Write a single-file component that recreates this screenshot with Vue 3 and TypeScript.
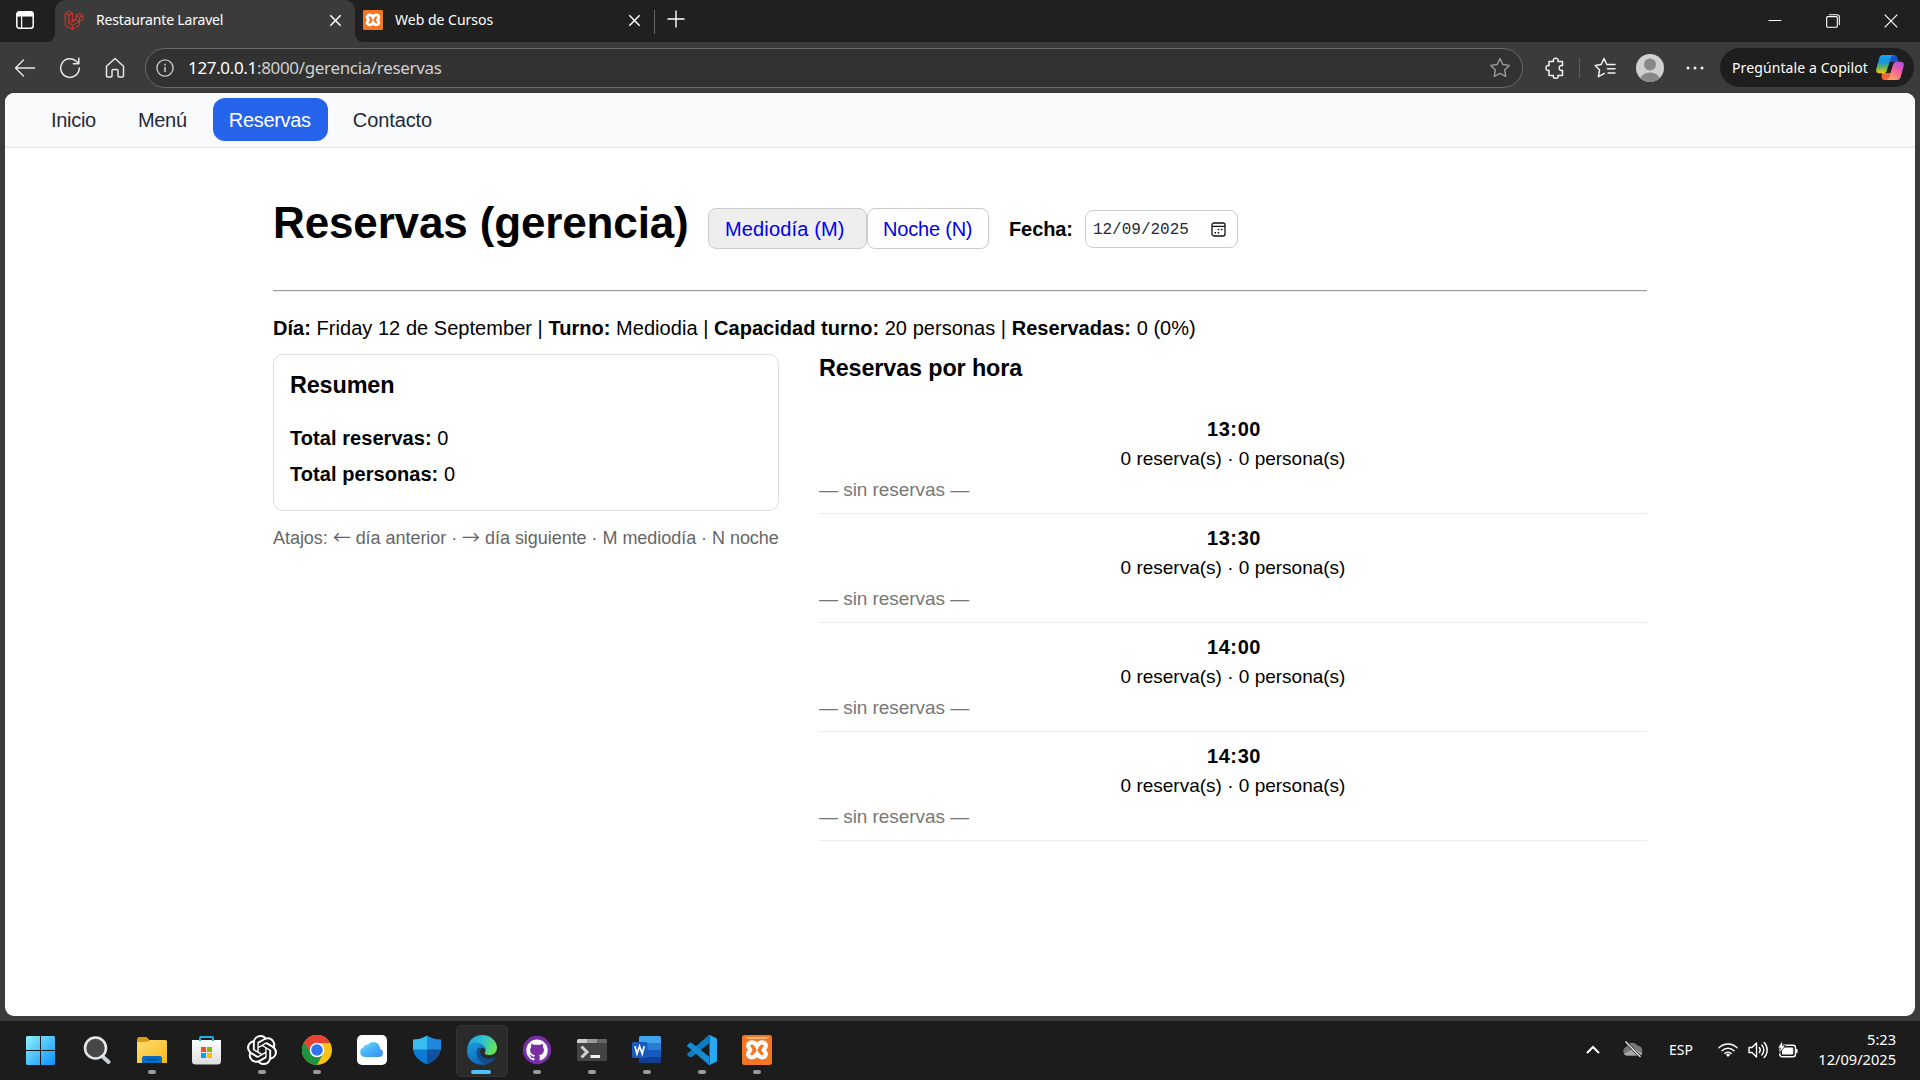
<script setup lang="ts">
interface Slot {
  time: string
  bookings: number
  people: number
}

interface NavItem {
  label: string
  key: string
}

const navItems: NavItem[] = [
  { label: 'Inicio', key: 'inicio' },
  { label: 'Menú', key: 'menu' },
  { label: 'Reservas', key: 'reservas' },
  { label: 'Contacto', key: 'contacto' },
]
const activeNav = 'reservas'

const slots: Slot[] = ['13:00', '13:30', '14:00', '14:30'].map((time) => ({
  time,
  bookings: 0,
  people: 0,
}))

const xamppPath =
  'M15 11C13.500 8 11.800 7.300 10 7.300 6.500 7.300 5.800 10.300 6.500 12 7 13.300 8.300 14 8.300 15S6.800 16.700 6.300 18.300C5.700 20.700 7.600 22.300 10 22.300 12.300 22.300 13.600 21 15 18.700 16.400 21 17.700 22.300 20 22.300 22.400 22.300 24.300 20.700 23.700 18.300 23.200 16.700 21.700 16 21.700 15S23 13.300 23.500 12C24.200 10.300 23.500 7.300 20 7.300 18.200 7.300 16.500 8 15 11z'
</script>

<template>
  <div class="screen">
    <!-- Tab strip -->
    <div class="tabs">
      <div class="tab-menu">
        <svg width="20" height="20" viewBox="0 0 20 20" fill="none" stroke="#fff" stroke-width="1.5">
          <rect x="1.8" y="1.8" width="16.4" height="16.4" rx="2.5" />
          <path d="M2 4.3h16" stroke-width="4.5" />
          <path d="M6.6 6v12" stroke-width="1.2" />
        </svg>
      </div>
      <div class="tab active">
        <svg class="fav" width="20" height="20" viewBox="0 0 20 21" fill="none" stroke="#e0352b" stroke-width="1.05" stroke-linejoin="round">
          <path d="M.8 3.5 4.6 1.3l3.7 2.2v8.5l3.6-2.1V6l3.7-2.2L19.3 6v4.1l-3.7 2.1v4.1l-7.3 4.1-7.5-4.2z" />
          <path d="m.8 3.5 3.8 2.1 3.7-2.1M4.6 5.6V14l3.7 2.2 7.3-4-3.7-2.3L4.6 14M8.3 16.2v4.2M11.9 6l3.7 2.1L19.3 6M15.6 8.1v4.1" />
        </svg>
        <span class="tab-title laravel">Restaurante Laravel</span>
        <svg class="x" width="13" height="13" viewBox="0 0 13 13" stroke="#fff" stroke-width="1.5"><path d="m1.3 1.3 10.4 10.4M11.7 1.3 1.3 11.7" /></svg>
      </div>
      <div class="tab second">
        <svg class="fav" width="20" height="20" viewBox="0 0 30 30">
          <rect width="30" height="30" rx="2" fill="#f37623" />
          <path :d="xamppPath" fill="none" stroke="#fff" stroke-width="4.2" />
        </svg>
        <span class="tab-title cursos">Web de Cursos</span>
        <svg class="x" width="13" height="13" viewBox="0 0 13 13" stroke="#fff" stroke-width="1.5"><path d="m1.3 1.3 10.4 10.4M11.7 1.3 1.3 11.7" /></svg>
      </div>
      <div class="tab-sep"></div>
      <svg class="plus" width="18" height="18" viewBox="0 0 18 18" stroke="#fff" stroke-width="1.4"><path d="M9 .5v17M.5 9h17" /></svg>
      <div class="win-controls">
        <svg width="14" height="14" viewBox="0 0 14 14" stroke="#fff" fill="none"><path d="M.5 6.500h13" /></svg>
        <svg width="14" height="14" viewBox="0 0 14 14" stroke="#fff" fill="none" stroke-width="1.1"><rect x=".7" y="2.600" width="10.600" height="10.600" rx="1" /><path d="M3 .7h8a2.300 2.300 0 0 1 2.300 2.300v8" /></svg>
        <svg width="14" height="14" viewBox="0 0 14 14" stroke="#fff" fill="none" stroke-width="1.2"><path d="m.7.7 12.600 12.600M13.300.7.7 13.300" /></svg>
      </div>
    </div>

    <!-- Toolbar -->
    <div class="toolbar">
      <svg class="tb-back" width="22" height="20" viewBox="0 0 22 20" fill="none" stroke="#e8e8e8" stroke-width="1.400" stroke-linecap="round" stroke-linejoin="round"><path d="M20.500 10H1.500M9.500 2 1.500 10l8 8" /></svg>
      <svg class="tb-reload" width="22" height="22" viewBox="0 0 22 22" fill="none" stroke="#e8e8e8" stroke-width="1.500" stroke-linecap="round" stroke-linejoin="round"><path d="M20.300 11A9.300 9.300 0 1 1 17.600 4.500L19.600 6.500M19.800 1.300v5.500h-5.500" /></svg>
      <svg class="tb-home" width="20" height="22" viewBox="0 0 20 22" fill="none" stroke="#e8e8e8" stroke-width="1.500" stroke-linejoin="round"><path d="M1.500 9.200 10 1.500l8.500 7.700v9.600q0 1.200-1.200 1.200h-3.100q-1.200 0-1.200-1.200v-5q0-1.200-1.200-1.200H8.200q-1.200 0-1.200 1.200v5Q7 20 5.800 20H2.700q-1.200 0-1.200-1.200z" /></svg>
      <div class="url">
        <svg width="18" height="18" viewBox="0 0 18 18" fill="none" stroke="#c4c4c4" stroke-width="1.400"><circle cx="9" cy="9" r="8.100" /><path d="M9 8v5M9 4.800v1.700" stroke-width="1.600" /></svg>
        <span class="url-text"><b>127.0.0.1</b>:8000/gerencia/reservas</span>
        <svg class="url-star" width="22" height="22" viewBox="0 0 22 22" fill="none" stroke="#9a9a9a" stroke-width="1.400" stroke-linejoin="round"><path d="m11 1.500 2.800 6 6.500.9-4.700 4.500 1.200 6.600L11 16.300l-5.800 3.200 1.200-6.600L1.700 8.400l6.500-.9z" /></svg>
      </div>
      <svg class="tb-ext" width="20" height="22" viewBox="0 0 20 22" fill="none" stroke="#f0f0f0" stroke-width="1.500" stroke-linejoin="round"><path d="M4 4.500h4.500C7.800 2.500 9 1.300 10.700 1.300s2.900 1.200 2.200 3.200h4.600v4.300c-2-.7-3.300.4-3.300 2.200s1.300 2.900 3.300 2.200v5.300h-4.600c.7 2-.5 2.800-2.200 2.800s-2.900-.8-2.200-2.800H4v-5.300C2 13.900 1 12.700 1 11s1-2.900 3-2.200z" /></svg>
      <div class="tb-sep"></div>
      <svg class="tb-favs" width="22" height="22" viewBox="0 0 22 22" fill="none" stroke="#f0f0f0" stroke-width="1.500" stroke-linejoin="round" stroke-linecap="round"><path d="M12.800 7.500 10 1.500 7.200 7.500 1.200 8.400l4.400 4.500-1.200 6.800 6-3.300M12.800 7.500H21M13.500 11.800H21M14 16h7" /></svg>
      <svg class="tb-avatar" width="28" height="28" viewBox="0 0 28 28"><defs><clipPath id="av"><circle cx="14" cy="14" r="14" /></clipPath></defs><g clip-path="url(#av)"><rect width="28" height="28" fill="#d2d0ce" /><circle cx="14" cy="10.500" r="6" fill="#8a8886" /><ellipse cx="14" cy="26" rx="10" ry="7.500" fill="#8a8886" /></g></svg>
      <svg class="tb-dots" width="18" height="4" viewBox="0 0 18 4" fill="#f0f0f0"><circle cx="2" cy="2" r="1.500" /><circle cx="9" cy="2" r="1.500" /><circle cx="16" cy="2" r="1.500" /></svg>
      <div class="copilot">
        <span>Pregúntale a Copilot</span>
        <svg width="28" height="27" viewBox="0 0 28 27">
          <defs>
            <linearGradient id="cpa" x1="0" y1="0" x2="0" y2="1"><stop offset="0" stop-color="#16a5ee" /><stop offset=".4" stop-color="#1994d4" /><stop offset=".7" stop-color="#6cb84a" /><stop offset="1" stop-color="#f7cb0c" /></linearGradient>
            <linearGradient id="cpb" x1="1" y1="0" x2=".3" y2="1"><stop offset="0" stop-color="#a14cf5" /><stop offset=".5" stop-color="#f3609f" /><stop offset="1" stop-color="#fda45c" /></linearGradient>
          </defs>
          <path d="M13 1h5.500c1.600 0 2.300 1.200 2.800 2.800L22.500 8H14z" fill="#1a50d2" />
          <path d="M6 19h8l-1 7H9c-2 0-3-1-3.400-2.600z" fill="#f0643c" />
          <path d="M6.500 1h10.700c-1.700.8-2.300 2.700-3 5L10.800 16.500C10.200 18.500 9 19.300 7 19.300H3.200C.7 19.300-.3 17.500.3 15L3.300 4C3.900 2 5 1 6.500 1z" fill="url(#cpa)" />
          <path d="M21.500 26H10.800c1.700-.8 2.300-2.700 3-5l3.400-10.500c.6-2 1.800-2.800 3.800-2.800h3.800c2.500 0 3.500 1.800 2.900 4.300l-3 11c-.6 2-1.700 3-3.200 3z" fill="url(#cpb)" />
        </svg>
      </div>
    </div>

    <!-- Web page -->
    <div class="page">
      <nav class="nav">
        <a v-for="item in navItems" :key="item.key" :class="['nav-link', item.key, { on: item.key === activeNav }]">{{ item.label }}</a>
      </nav>
      <main class="main">
        <header class="head">
          <h1>Reservas (gerencia)</h1>
          <div class="shifts">
            <a class="shift noon on">Mediodía (M)</a>
            <a class="shift night">Noche (N)</a>
          </div>
          <label class="date-label">Fecha:</label>
          <div class="date">
            <span>12/09/2025</span>
            <svg width="15" height="15" viewBox="0 0 15 15" fill="none" stroke="#111" stroke-width="1.300"><rect x="1" y="1" width="13" height="13" rx="2" /><path d="M1 4.300h13" /><path d="M6.700 7.500h1.600M9.900 7.500h1.600M3.500 10.700h1.600M6.700 10.700h1.600" stroke-width="1.500" /></svg>
          </div>
        </header>
        <div class="rule"></div>
        <p class="info"><b>Día:</b> Friday 12 de September | <b>Turno:</b> Mediodia | <b>Capacidad turno:</b> 20 personas | <b>Reservadas:</b> 0 (0%)</p>
        <div class="cols">
          <section>
            <div class="card">
              <h3 class="resumen">Resumen</h3>
              <p class="tot-r"><b>Total reservas:</b> 0</p>
              <p class="tot-p"><b>Total personas:</b> 0</p>
            </div>
            <p class="hints">Atajos: <i>←</i> día anterior · <i>→</i> día siguiente · M mediodía · N noche</p>
          </section>
          <section>
            <h3 class="byhour">Reservas por hora</h3>
            <div class="slots">
              <div v-for="slot in slots" :key="slot.time" class="slot">
                <div class="time">{{ slot.time }}</div>
                <div class="count">{{ slot.bookings }} reserva(s) · {{ slot.people }} persona(s)</div>
                <div class="empty">— sin reservas —</div>
              </div>
            </div>
          </section>
        </div>
      </main>
    </div>

    <!-- Taskbar -->
    <div class="taskbar">
      <div class="apps">
        <div class="app">
          <svg class="start" width="29" height="29" viewBox="0 0 29 29"><defs><linearGradient id="win" x1="0" y1="0" x2="1" y2="1"><stop offset="0" stop-color="#8cf3fb" /><stop offset="1" stop-color="#0d8ffb" /></linearGradient></defs><path d="M1 0h13v14H0V1zM15 0h13l1 1v13H15zM0 15h14v14H1l-1-1zM15 15h14v13l-1 1H15z" fill="url(#win)" /></svg>
        </div>
        <div class="app">
          <svg width="28" height="30" viewBox="0 0 28 30"><path d="m18.500 20.500 7 6.500" stroke="#c9ced8" stroke-width="4" stroke-linecap="round" /><circle cx="12.500" cy="13" r="10.500" fill="#474747" stroke="#e3e6ec" stroke-width="2.600" /></svg>
        </div>
        <div class="app running">
          <svg width="30" height="30" viewBox="0 0 30 30"><defs><linearGradient id="fold" x1="0" y1="0" x2="1" y2="1"><stop offset="0" stop-color="#ffde76" /><stop offset="1" stop-color="#f9b914" /></linearGradient></defs><path d="M0 4.500Q0 2 2 2h7.500l3 3V9H0z" fill="#dd9d0e" /><path d="M0 7h10.500l2.500-2H28.500Q30 5 30 6.500V28H0z" fill="url(#fold)" /><path d="M5 28v-5q0-2 2-2h16q2 0 2 2v5z" fill="#0a6cc0" /><path d="M8.500 24.500h13" stroke="#0a4a86" stroke-width="1.200" /></svg>
        </div>
        <div class="app">
          <svg width="29" height="30" viewBox="0 0 29 30"><defs><linearGradient id="store" x1="0" y1="0" x2="0" y2="1"><stop offset="0" stop-color="#fff" /><stop offset="1" stop-color="#dcdcdc" /></linearGradient></defs><path d="M8 7V3q0-1 1-1h11q1 0 1 1v4" fill="none" stroke="#25b0e6" stroke-width="2" /><path d="M0 5h29v21q0 3.500-3.500 3.500h-22Q0 29.500 0 26z" fill="url(#store)" /><path d="M9 12h5v5H9z" fill="#f25022" /><path d="M15 12h5v5h-5z" fill="#7fba00" /><path d="M9 18h5v5H9z" fill="#00a4ef" /><path d="M15 18h5v5h-5z" fill="#ffb900" /><path d="M7 5h2v1H7zM20 5h2v1h-2z" fill="#25b0e6" /></svg>
        </div>
        <div class="app running">
          <svg width="30" height="30" viewBox="0 0 24 24" fill="#fff"><path d="M22.282 9.821a5.985 5.985 0 0 0-.516-4.910 6.046 6.046 0 0 0-6.510-2.900A6.065 6.065 0 0 0 4.981 4.182a5.985 5.985 0 0 0-3.998 2.900 6.046 6.046 0 0 0 .743 7.097 5.980 5.980 0 0 0 .510 4.911 6.051 6.051 0 0 0 6.515 2.900A5.985 5.985 0 0 0 13.260 24a6.056 6.056 0 0 0 5.772-4.206 5.990 5.990 0 0 0 3.998-2.900 6.056 6.056 0 0 0-.748-7.073zM13.260 22.430a4.476 4.476 0 0 1-2.876-1.040l.142-.081 4.779-2.758a.795.795 0 0 0 .393-.681v-6.737l2.020 1.169a.071.071 0 0 1 .038.052v5.583a4.504 4.504 0 0 1-4.496 4.493zM3.600 18.304a4.471 4.471 0 0 1-.535-3.014l.142.085 4.783 2.758a.771.771 0 0 0 .781 0l5.843-3.368v2.332a.080.080 0 0 1-.033.062L9.740 19.950a4.499 4.499 0 0 1-6.140-1.646zM2.340 7.896a4.485 4.485 0 0 1 2.366-1.973V11.600a.766.766 0 0 0 .388.677l5.814 3.354-2.020 1.169a.076.076 0 0 1-.071 0l-4.830-2.787A4.504 4.504 0 0 1 2.340 7.896zm16.597 3.855-5.833-3.387L15.119 7.200a.076.076 0 0 1 .071 0l4.830 2.792a4.494 4.494 0 0 1-.676 8.105v-5.678a.790.790 0 0 0-.407-.668zm2.010-3.023-.141-.085-4.774-2.782a.776.776 0 0 0-.785 0L9.409 9.230V6.897a.066.066 0 0 1 .028-.062l4.830-2.787a4.499 4.499 0 0 1 6.680 4.660zM8.307 12.863l-2.020-1.164a.080.080 0 0 1-.038-.057V6.075a4.499 4.499 0 0 1 7.376-3.453l-.142.080L8.704 5.460a.795.795 0 0 0-.393.681zm1.097-2.365 2.602-1.500 2.607 1.500v2.999l-2.597 1.500-2.607-1.500z" /></svg>
        </div>
        <div class="app running">
          <svg width="30" height="30" viewBox="0 0 30 30"><circle cx="15" cy="15" r="15" fill="#fbc116" /><path d="M15 15 8.500 18.700 2 7.500a15 15 0 0 1 26 0L28 8H15z" fill="#ea4335" /><path d="M2 7.500A15 15 0 0 0 15 30l6.300-11.500L15 20l-6-2z" fill="#1e9442" /><path d="M28 8H15v-1h12.500z" fill="#e33b2e" /><circle cx="15" cy="15" r="7.300" fill="#fff" /><circle cx="15" cy="15" r="5.800" fill="#2d74ea" /></svg>
        </div>
        <div class="app">
          <svg width="30" height="30" viewBox="0 0 30 30"><defs><linearGradient id="icl" x1="0" y1="0" x2="1" y2="1"><stop offset="0" stop-color="#8ad8fa" /><stop offset=".5" stop-color="#43b2f8" /><stop offset="1" stop-color="#3a8bf5" /></linearGradient></defs><rect width="30" height="30" rx="5" fill="#fff" /><path d="M7.500 22a5 5 0 0 1-1.300-9.500 4 4 0 0 1 4.500-2.700 6.800 6.800 0 0 1 12.300 4 4.300 4.300 0 0 1-.2 8.200z" fill="url(#icl)" /></svg>
        </div>
        <div class="app">
          <svg width="30" height="30" viewBox="0 0 30 30"><path d="M15 .5Q21 4.500 29 4.500V15H15z" fill="#2089dc" /><path d="M15 .5Q9 4.500 1 4.500V15h14z" fill="#38bdf0" /><path d="M1 14.500h14v15Q2 24 1 14.500z" fill="#0d7ad2" /><path d="M29 14.500H15v15Q28 24 29 14.500z" fill="#13529c" /></svg>
        </div>
        <div class="app edge">
          <svg width="30" height="30" viewBox="0 0 30 30"><defs><linearGradient id="ea" x1="0" y1=".3" x2="1" y2=".6"><stop offset="0" stop-color="#249fe0" /><stop offset=".5" stop-color="#30c5cb" /><stop offset="1" stop-color="#6be34f" /></linearGradient><linearGradient id="eb" x1="0" y1="0" x2=".6" y2="1"><stop offset="0" stop-color="#1b9de2" /><stop offset="1" stop-color="#0c67b9" /></linearGradient></defs><path d="M.3 14C1 5.500 7 0 15 0c9 0 15 6.500 15 12.500 0 5-3.500 7.500-7.500 7.500-3.600 0-5.300-1.300-4.700-2.300 1.500-2.400.5-5-1.300-6.700C12 7 3.500 7.500.3 14z" fill="url(#ea)" /><path d="M.1 15.500C.6 9.500 5 7.500 9 7.600c5.500.1 10 4 9.800 7.400-2.400-3.500-6.800-2.300-7.800 1.500C9.500 22 14 28.500 19.500 29.200 9 32-.7 25 .1 15.500z" fill="url(#eb)" /><path d="M10.200 14C8 20 12 27.500 19.500 29.200c3.800-.8 6.800-3.200 8.500-6 .3-.6-.1-.9-.7-.6C22 25.300 14 23.500 13.300 17c-.2-1.800.3-3.500 1.500-4.500-2-.2-3.700.1-4.600 1.500z" fill="#144c92" /></svg>
        </div>
        <div class="app running">
          <svg width="30" height="30" viewBox="0 0 30 30"><circle cx="15" cy="15" r="14.200" fill="#7a2da4" /><g transform="translate(4.300 4.500) scale(1.340)"><path fill="#fff" d="M8 0C3.580 0 0 3.580 0 8c0 3.540 2.290 6.530 5.470 7.590.4.070.55-.17.55-.38 0-.19-.01-.82-.01-1.490-2.010.37-2.530-.49-2.690-.94-.09-.23-.48-.94-.82-1.130-.28-.15-.68-.52-.01-.53.63-.01 1.080.58 1.230.82.72 1.210 1.870.87 2.330.66.07-.52.28-.87.51-1.070-1.780-.2-3.640-.89-3.640-3.950 0-.87.31-1.590.82-2.150-.08-.2-.36-1.020.08-2.120 0 0 .67-.21 2.200.82.64-.18 1.320-.27 2-.27s1.360.09 2 .27c1.530-1.040 2.200-.82 2.200-.82.44 1.100.16 1.920.08 2.120.51.56.82 1.270.82 2.150 0 3.070-1.870 3.750-3.650 3.950.29.25.54.73.54 1.480 0 1.070-.01 1.930-.01 2.200 0 .21.15.46.55.38A8.010 8.010 0 0 0 16 8c0-4.420-3.580-8-8-8z" /></g></svg>
        </div>
        <div class="app running">
          <svg width="30" height="30" viewBox="0 0 30 30"><path d="M0 5.500Q0 4 1.500 4h27Q30 4 30 5.500v19q0 1.500-1.500 1.500h-27Q0 26 0 24.500z" fill="#444" /><path d="M0 8V5.500Q0 4 1.500 4H10v4z" fill="#ccc" /><path d="M10 4h10v4H10z" fill="#999" /><path d="M20 4h8.500Q30 4 30 5.500V8H20z" fill="#666" /><path d="m4.500 11.500 5.500 5.500-5.500 5.500" fill="none" stroke="#d0d0d0" stroke-width="3" /><path d="M13.500 21.500H23" stroke="#f2f2f2" stroke-width="3" /></svg>
        </div>
        <div class="app running">
          <svg width="30" height="30" viewBox="0 0 30 30"><path d="M7 2.500Q7 1 8.500 1h19Q29 1 29 2.500V8H7z" fill="#41a5ee" /><path d="M7 8h22v7H7z" fill="#2b7cd3" /><path d="M7 15h22v7H7z" fill="#185abd" /><path d="M7 22h22v4.500q0 1.500-1.500 1.500h-19Q7 28 7 26.500z" fill="#103f91" /><rect y="7" width="15.500" height="16" rx="1.500" fill="#185abd" /><path d="m3 11.300 2 7.500 2.600-7.500 2.600 7.500 2-7.500" fill="none" stroke="#fff" stroke-width="1.700" /></svg>
        </div>
        <div class="app running">
          <svg width="30" height="30" viewBox="0 0 30 30"><path d="M22 0v8.500L4 22.500 2.500 22 .3 20q-.6-.8.2-1.600z" fill="#0c7cc4" /><path d="M22 30v-8.500L4 7.500 2.500 8 .3 10q-.6.800.2 1.600z" fill="#168bd4" /><path d="M21.500.2Q22.500-.2 23.500.4L29 3q1 .5 1 1.700v20.600q0 1.200-1 1.700l-5.500 2.600q-1.200.6-2 0Q22.500 29.500 22.500 28V2Q22.500.7 21.500.2z" fill="#29a9f2" /></svg>
        </div>
        <div class="app running">
          <svg width="30" height="30" viewBox="0 0 30 30"><rect width="30" height="30" rx="2.500" fill="#f37623" /><path d="M3 2h24l-3 2H6z" fill="#fbb27d" /><path :d="xamppPath" fill="none" stroke="#fff" stroke-width="4.200" /></svg>
        </div>
      </div>
      <div class="tray">
        <svg class="t-chev" width="14" height="9" viewBox="0 0 14 9" fill="none" stroke="#fff" stroke-width="2"><path d="m1 8 6-6 6 6" /></svg>
        <svg class="t-cloud" width="22" height="17" viewBox="0 0 22 17"><path d="M5 14.500A4.400 4.400 0 0 1 4.300 6 6.300 6.300 0 0 1 15.500 4.500 5.200 5.200 0 0 1 17 14.500z" fill="#777" /><path d="M2 13 12 7.500l8.500 5Q19.500 14.500 17 14.500H5q-2 0-3-1.500z" fill="#aaa" /><path d="m3.500.5 15 15.500" stroke="#1c1c1c" stroke-width="2.600" /><path d="m3.500.5 15 15.500" stroke="#eee" stroke-width="1.300" /></svg>
        <span class="t-lang">ESP</span>
        <svg class="t-wifi" width="20" height="15" viewBox="0 0 20 15" fill="none" stroke="#fff" stroke-width="1.500" stroke-linecap="round"><path d="M1 5.800a12.700 12.700 0 0 1 18 0M4 8.700a8.500 8.500 0 0 1 12 0M6.900 11.500a4.400 4.400 0 0 1 6.200 0" /><circle cx="10" cy="13" r="1.300" fill="#fff" stroke-width=".6" /></svg>
        <svg class="t-vol" width="20" height="18" viewBox="0 0 20 18" fill="none" stroke="#fff" stroke-width="1.400" stroke-linecap="round" stroke-linejoin="round"><path d="M1 6.500h3L8.500 2v14L4 11.500H1zM11.300 6.500a4 4 0 0 1 0 5M13.800 4a7.200 7.200 0 0 1 0 10M16.200 1.500a11 11 0 0 1 0 15" /></svg>
        <svg class="t-bat" width="20" height="17" viewBox="0 0 20 17"><rect x="1.700" y="4.200" width="15.800" height="11.500" rx="2.500" fill="none" stroke="#fff" stroke-width="1.400" /><rect x="4" y="6.500" width="11.200" height="7" rx="1" fill="#fff" /><path d="M18 8h1.500v4H18z" fill="#fff" /><path d="M4.500-.5-.3 7h2.700L1.300 12.500l6.200-8H4.600z" fill="#fff" stroke="#1c1c1c" stroke-width=".8" /></svg>
        <div class="clock"><span>5:23</span><span>12/09/2025</span></div>
      </div>
    </div>
  </div>
</template>

<style>
html,
body {
  margin: 0;
  background: #3b3b3b;
}
</style>

<style scoped>
* {
  box-sizing: border-box;
}
.screen {
  width: 1920px;
  height: 1080px;
  display: flex;
  flex-direction: column;
  background: #3b3b3b;
  overflow: hidden;
  font-family: 'Noto Sans', 'Open Sans', sans-serif;
  color: #fff;
  white-space: nowrap;
}
svg {
  display: block;
  flex: none;
}
h1,
h3,
p {
  margin: 0;
}

/* tab strip */
.tabs {
  height: 42px;
  flex: none;
  display: flex;
  background: #3b3b3b;
}
.tab-menu {
  width: 55px;
  padding: 10px 0 0 15px;
  background: #202020;
  border-radius: 0 0 8px 0;
}
.tab {
  display: flex;
  align-items: center;
  height: 42px;
  padding-bottom: 2px;
}
.tab.active {
  width: 300px;
  padding-left: 9px;
  background:
    radial-gradient(circle at 10px 10px, transparent 9.5px, #202020 10px) left top / 10px 10px no-repeat,
    radial-gradient(circle at 0 10px, transparent 9.5px, #202020 10px) right top / 10px 10px no-repeat;
}
.tab.second {
  width: 299px;
  padding-left: 8px;
  background: #202020;
  border-radius: 0 0 0 8px;
}
.tab-title {
  margin-left: 12px;
  font-size: 14px;
  line-height: 20px;
}
.tab-title.laravel {
  letter-spacing: -0.18px;
}
.x {
  margin-left: auto;
}
.tab .x {
  margin-right: 13px;
}
.tab-sep {
  width: 13px;
  background: linear-gradient(#666, #666) 0 10px / 1px 24px no-repeat, #202020;
}
.plus {
  width: 18px;
  height: 42px;
  padding: 10px 0 14px;
  background: #202020;
}
.win-controls {
  flex: 1;
  display: flex;
  justify-content: flex-end;
  gap: 44px;
  padding: 14px 22px 0 0;
  background: #202020;
}

/* toolbar */
.toolbar {
  height: 51px;
  flex: none;
  display: flex;
  align-items: center;
  padding: 0 6px 0 14px;
}
.tb-reload {
  margin-left: 23px;
}
.tb-home {
  margin-left: 24px;
}
.url {
  width: 1378px;
  height: 40px;
  margin-left: 20px;
  padding: 0 11px 0 10px;
  display: flex;
  align-items: center;
  background: #323232;
  border: 1px solid #6b6b6b;
  border-radius: 20px;
}
.url-text {
  margin-left: 14px;
  font-size: 17px;
  letter-spacing: -0.34px;
  color: #d0d0d0;
}
.url-text b {
  font-weight: 400;
  color: #fff;
}
.url-star {
  margin-left: auto;
}
.tb-ext {
  margin-left: 22px;
}
.tb-sep {
  width: 1px;
  height: 20px;
  margin-left: 14px;
  background: #5c5c5c;
}
.tb-favs {
  margin-left: 14px;
}
.tb-avatar {
  margin-left: 20px;
}
.tb-dots {
  margin-left: 22px;
}
.copilot {
  width: 194px;
  height: 39px;
  margin-left: auto;
  padding: 0 10px 0 12px;
  display: flex;
  align-items: center;
  justify-content: space-between;
  background: #1e1e1e;
  border-radius: 20px;
  font-size: 14px;
  letter-spacing: 0.1px;
}

/* web page */
.page {
  height: 923px;
  flex: none;
  margin: 0 5px 5px;
  background: #fff;
  border-radius: 9px;
  overflow: hidden;
  color: #000;
  font-family: 'Liberation Sans', Arial, sans-serif;
  font-size: 20px;
}
.nav {
  height: 55px;
  display: flex;
  gap: 9px;
  padding: 5px 0 0 30px;
  background: #f9fafc;
  border-bottom: 1px solid #e3e5e8;
}
.nav-link {
  height: 43px;
  padding: 0 17px 0 16px;
  line-height: 44px;
  letter-spacing: -0.3px;
  border-radius: 12px;
  color: #1f2937;
}
.nav-link.on {
  background: #2563eb;
  color: #fff;
}
.nav-link.contacto {
  letter-spacing: -0.1px;
}
.main {
  width: 1374px;
  margin-left: 268px;
}
.head {
  height: 142px;
  padding-top: 19px;
  display: flex;
  align-items: center;
}
h1 {
  width: 435px;
  margin-bottom: 11px;
  font-size: 44px;
  line-height: 50px;
  letter-spacing: -0.14px;
}
.shifts {
  display: flex;
}
.shift {
  height: 41px;
  padding: 0 16px;
  line-height: 40px;
  border: 1px solid #ccc;
  border-radius: 8px;
  color: #0000ee;
}
.shift.noon {
  width: 159px;
  letter-spacing: 0.15px;
}
.shift.night {
  width: 122px;
  padding: 0 15px;
  letter-spacing: -0.2px;
}
.shift.on {
  background: #eee;
}
.date-label {
  margin-left: 20px;
  padding-top: 1px;
  font-weight: 700;
  letter-spacing: -0.1px;
}
.date {
  width: 153px;
  height: 38px;
  margin: 1px 0 0 12px;
  padding: 0 11px 0 7px;
  display: flex;
  align-items: center;
  justify-content: space-between;
  border: 1px solid #ccc;
  border-radius: 8px;
  font-family: 'Liberation Mono', monospace;
  font-size: 16px;
  color: #1f2937;
}
.date span {
  padding-top: 1px;
}
.rule {
  height: 2px;
  border-top: 1px solid #9a9a9a;
  border-bottom: 1px solid #eee;
}
.info {
  margin-top: 23px;
  line-height: 26px;
  letter-spacing: 0.04px;
}
.cols {
  margin-top: 13px;
  display: grid;
  grid-template-columns: 506px 828px;
  column-gap: 40px;
}
.card {
  height: 157px;
  padding: 17px 16px 0;
  border: 1px solid #ddd;
  border-radius: 10px;
}
h3 {
  font-size: 23.4px;
  line-height: 27px;
  letter-spacing: -0.14px;
}
.card h3 {
  margin-bottom: 21px;
}
.card p {
  line-height: 36px;
  letter-spacing: 0.06px;
}
.hints {
  margin-top: 15px;
  font-size: 18px;
  line-height: 24px;
  letter-spacing: -0.04px;
  color: #666;
}
.hints i {
  font-style: normal;
  font-family: 'Noto Sans CJK JP', sans-serif;
  line-height: 1;
}
.byhour {
  margin-top: 1px;
}
.slots {
  margin-top: 23px;
}
.slot {
  height: 109px;
  padding-top: 9px;
  border-bottom: 1px solid #eee;
  line-height: 30px;
}
.time {
  padding-left: 2px;
  text-align: center;
  font-weight: 700;
  letter-spacing: 0.6px;
}
.count {
  text-align: center;
  font-size: 19px;
}
.empty {
  line-height: 32px;
  font-size: 19px;
  letter-spacing: -0.05px;
  color: #777;
}

/* taskbar */
.taskbar {
  height: 59px;
  flex: none;
  display: flex;
  align-items: center;
  justify-content: space-between;
  background: #1c1c1c;
}
.apps {
  display: flex;
  padding-left: 14px;
}
.app {
  position: relative;
  width: 55px;
  height: 59px;
  padding-bottom: 1px;
  display: flex;
  align-items: center;
  justify-content: center;
}
.app svg {
  position: relative;
  z-index: 1;
}
.start {
  margin-right: 2px;
}
.running::after,
.edge::after {
  content: '';
  position: absolute;
  bottom: 6px;
  left: 24px;
  width: 8px;
  height: 4px;
  border-radius: 2px;
  background: #9a9a9a;
}
.edge::before {
  content: '';
  position: absolute;
  left: 2px;
  top: 4px;
  width: 50px;
  height: 50px;
  border: 1px solid #343434;
  border-radius: 5px;
  background: #2a2a2a;
}
.edge::after {
  left: 17px;
  width: 20px;
  background: #4cc2ff;
}
.tray {
  display: flex;
  align-items: center;
  padding: 0 24px 2px 0;
}
.t-cloud {
  margin-left: 22px;
}
.t-lang {
  width: 24px;
  margin-left: 25px;
  font-size: 14px;
}
.t-wifi {
  margin-left: 25px;
}
.t-vol {
  margin-left: 10px;
}
.t-bat {
  margin-left: 10px;
}
.clock {
  width: 98px;
  padding-bottom: 2px;
  display: flex;
  flex-direction: column;
  align-items: flex-end;
  line-height: 20px;
  font-size: 14.6px;
}
</style>
